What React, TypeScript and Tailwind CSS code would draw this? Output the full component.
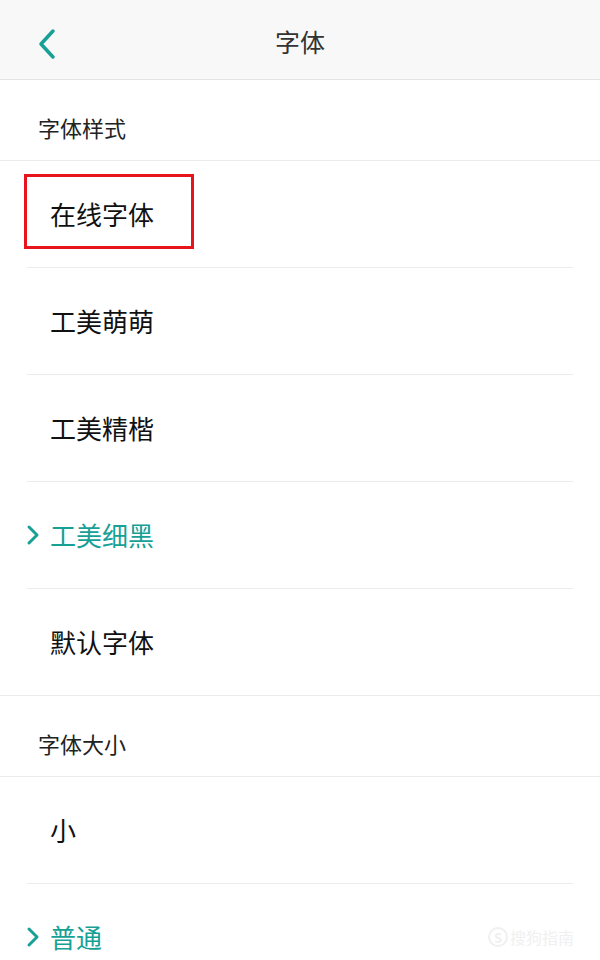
import React from 'react';

const TEAL = 'text-[#17a096]';

type FontItem = { label: string; selected?: boolean; marked?: boolean };

const styleItems: FontItem[] = [
  { label: '在线字体', marked: true },
  { label: '工美萌萌' },
  { label: '工美精楷' },
  { label: '工美细黑', selected: true },
  { label: '默认字体' },
];

const sizeItems: FontItem[] = [{ label: '小' }, { label: '普通', selected: true }];

const Chevron = () => (
  <svg width="14" height="22" viewBox="0 0 14 22" className="shrink-0">
    <path d="M3 3 L11 11 L3 19" fill="none" stroke="#17a096" strokeWidth="3" strokeLinecap="round" strokeLinejoin="round" />
  </svg>
);

const SectionTitle = ({ title }: { title: string }) => (
  <div className="h-[81px] border-b border-[#ececec] pl-[38px] pt-[32px] text-[22px] leading-[30px] text-[#222]">
    {title}
  </div>
);

const Row = ({ item, last }: { item: FontItem; last?: boolean }) => (
  <div className={`relative h-[107px] ${last ? 'border-b border-[#ececec]' : ''}`}>
    <div className="flex h-[106px] items-center">
      <div className="flex w-[50px] justify-end pr-[10px]">{item.selected && <Chevron />}</div>
      <span className={`text-[26px] leading-[32px] ${item.selected ? TEAL : 'text-[#111]'}`}>{item.label}</span>
    </div>
    {!last && <div className="mx-[27px] h-px bg-[#ececec]" />}
    {item.marked && (
      <div className="absolute left-[24px] top-[13px] h-[75px] w-[170px] border-[3px] border-[#e8141c]" />
    )}
  </div>
);

const App: React.FC = () => {
  return (
    <div className="h-[960px] w-[600px] overflow-hidden bg-white" style={{ fontFamily: '"Noto Sans CJK SC", "Noto Sans", sans-serif' }}>
      <div className="relative flex h-[80px] items-center justify-center border-b border-[#e3e3e3] bg-[#f8f8f8] pt-[3px]">
        <svg width="20" height="32" viewBox="0 0 20 32" className="absolute left-[37px] top-[28px]">
          <path d="M16 3 L4 16 L16 29" fill="none" stroke="#17a096" strokeWidth="3.5" strokeLinecap="round" strokeLinejoin="round" />
        </svg>
        <span className="text-[25px] leading-[32px] text-[#333]">字体</span>
      </div>

      <SectionTitle title="字体样式" />
      {styleItems.map((item, i) => (
        <Row key={item.label} item={item} last={i === styleItems.length - 1} />
      ))}

      <SectionTitle title="字体大小" />
      <div className="relative">
        {sizeItems.map((item) => (
          <Row key={item.label} item={item} />
        ))}
        <div className="absolute right-[26px] top-[150px] flex items-center gap-[2px] text-[#f0f0f0]">
          <span className="flex h-[20px] w-[20px] items-center justify-center rounded-full border-2 border-[#f0f0f0] text-[13px] font-bold leading-none">S</span>
          <span className="text-[16px] leading-[20px]">搜狗指南</span>
        </div>
      </div>
    </div>
  );
};

export default App;
